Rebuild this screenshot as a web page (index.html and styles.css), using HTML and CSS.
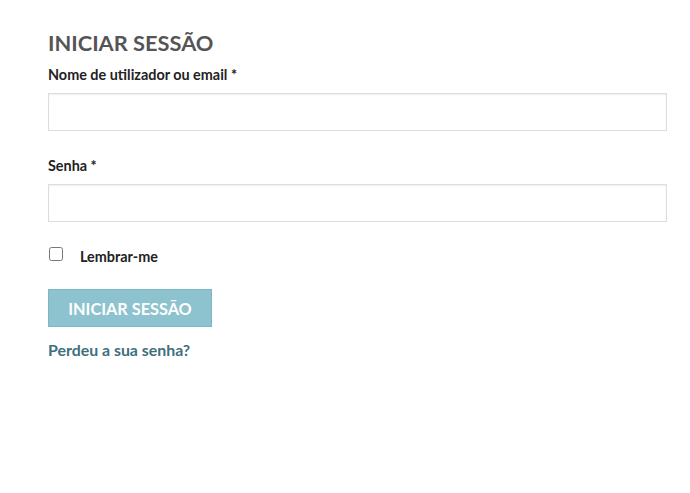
FILE: index.html
```html
<!DOCTYPE html>
<html lang="pt">
<head>
<meta charset="utf-8">
<link rel="stylesheet" href="styles.css">
</head>
<body>
<div class="wrap">
  <h2 class="title">INICIAR SESSÃO</h2>
  <form class="login">
    <div class="field">
      <label class="lbl">Nome de utilizador ou email <span class="req">*</span></label>
      <input class="inp" type="text">
    </div>
    <div class="field">
      <label class="lbl">Senha <span class="req">*</span></label>
      <input class="inp" type="password">
    </div>
    <label class="remember"><input class="chk" type="checkbox"><span>Lembrar-me</span></label>
    <button class="btn" type="button">INICIAR SESSÃO</button>
    <a class="lost" href="#">Perdeu a sua senha?</a>
  </form>
</div>
</body>
</html>
```
FILE: styles.css
```css
html, body { margin: 0; padding: 0; background: #fff; }
body { font-family: Lato, "Open Sans", sans-serif; color: #222; }
.wrap { padding: 30px 23px 0 48px; }
.title { margin: 0 0 10px; font-size: 21.8px; font-weight: 700; color: #555; line-height: 26px; }
.login { display: flex; flex-direction: column; }
.field { display: flex; flex-direction: column; margin-bottom: 26px; }
.lbl { font-size: 14.4px; font-weight: 700; line-height: 18px; margin-bottom: 9px; color: #222; }
.req { color: #222; }
.inp { box-sizing: border-box; height: 38px; width: 100%; border: 1px solid #ddd; box-shadow: inset 0 1px 2px rgba(0,0,0,0.07); background: #fff; margin: 0; padding: 0 10px; outline: none; }
.remember { display: flex; align-items: center; font-size: 14.4px; font-weight: 700; margin-top: -2px; }
.chk { margin: 0 17px 0 1px; width: 14px; height: 14px; position: relative; top: -1px; }
.remember span { position: relative; top: 2px; }
.btn { align-self: flex-start; margin-top: 26px; width: 164px; height: 38px; background: #8cc3cf; border: 1px solid #7fb6c3; color: #fff; font-family: Lato, sans-serif; font-size: 16.3px; font-weight: 700; padding: 0; }
.lost { margin-top: 13px; font-size: 15.9px; font-weight: 700; color: #3e6f7c; text-decoration: none; }
```
